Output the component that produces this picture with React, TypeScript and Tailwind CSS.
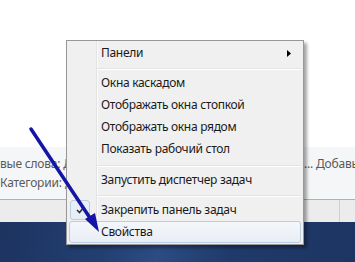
import React from "react";

type Item = { label: string; sub?: boolean; checked?: boolean; active?: boolean } | "sep" | "sep9";

const items: Item[] = [
  { label: "Панели", sub: true },
  "sep",
  { label: "Окна каскадом" },
  { label: "Отображать окна стопкой" },
  { label: "Отображать окна рядом" },
  { label: "Показать рабочий стол" },
  "sep9",
  { label: "Запустить диспетчер задач" },
  "sep",
  { label: "Закрепить панель задач", checked: true },
  { label: "Свойства", active: true },
];

function ContextMenu() {
  return (
    <div className="absolute left-[66px] top-[40px] w-[238px] border border-[#979797] bg-[#f0f0f0] py-[1px] shadow-[3px_3px_3px_rgba(0,0,0,0.35)]">
      {/* gutter line */}
      <div className="absolute left-[29px] top-0 bottom-0 w-[2px] border-l border-[#e2e3e3] bg-white/70" />
      {items.map((it, i) => {
        if (it === "sep" || it === "sep9") {
          return (
            <div key={i} className={`relative flex ${it === "sep9" ? "h-[9px] pt-[5px]" : "h-[8px] pt-[4px]"} pl-[30px] pr-[2px]`}>
              <div className="h-[2px] w-full border-t border-[#e2e3e3] bg-white" />
            </div>
          );
        }
        return (
          <div
            key={i}
            className={`relative flex h-[22px] items-center pl-[34px] pr-[12px] ${
              it.active
                ? "mx-[2px] rounded-[3px] border border-[#b9cde4] bg-[linear-gradient(#f4f7fb,#e9eef5)] !pl-[31px]"
                : ""
            }`}
          >
            {it.checked && (
              <div className="absolute left-[3px] top-[1px] flex h-[20px] w-[20px] items-center justify-center rounded-[3px] border border-[#b9cde4] bg-[#e8eef6]">
                <svg width="9" height="8" viewBox="0 0 9 8">
                  <path d="M1 4 L3.5 6.5 L8 1" fill="none" stroke="#333" strokeWidth="1.6" />
                </svg>
              </div>
            )}
            <span className="flex-1 text-[12px] leading-none tracking-[-0.3px] text-[#1a1a1a]">{it.label}</span>
            {it.sub && (
              <svg width="4" height="7" viewBox="0 0 4 7">
                <path d="M0 0 L4 3.5 L0 7 Z" fill="#000" />
              </svg>
            )}
          </div>
        );
      })}
    </div>
  );
}

export default function App() {
  return (
    <div
      className="relative flex h-[262px] w-[355px] flex-col overflow-hidden bg-white"
      style={{ fontFamily: '"Noto Sans", "Open Sans", sans-serif' }}
    >
      <div className="h-[147px] bg-white" />
      <div className="flex h-[53px] flex-col border-b border-[#b0b0b0] bg-[#f5f6f7] pt-[8px] text-[12px] tracking-[-0.2px] text-[#5a5a5a]">
        <div className="flex h-[18px] items-center justify-between">
          <span className="whitespace-nowrap">вые слова: Д</span>
          <span className="w-[51px] overflow-hidden whitespace-nowrap">... Добавьт</span>
        </div>
        <div className="flex h-[20px] items-center">
          <span className="whitespace-nowrap">Категории: ;</span>
        </div>
      </div>
      <div className="flex h-[22px] justify-end bg-[#ececec]">
        <div className="w-[16px] border-l border-[#d0d0d0]" />
      </div>
      <div className="flex-1 bg-[linear-gradient(100deg,#1d3360_0%,#233f72_30%,#2c4c82_45%,#203a6b_65%,#1d3562_100%)]" />

      <ContextMenu />

      {/* arrow */}
      <svg className="pointer-events-none absolute left-0 top-0" width="355" height="262">
        <line x1="31" y1="129" x2="92" y2="221" stroke="#1414a6" strokeWidth="3.5" strokeLinecap="round" />
        <path d="M99 232 L85 219 L95 213 Z" fill="#1414a6" />
      </svg>
    </div>
  );
}
